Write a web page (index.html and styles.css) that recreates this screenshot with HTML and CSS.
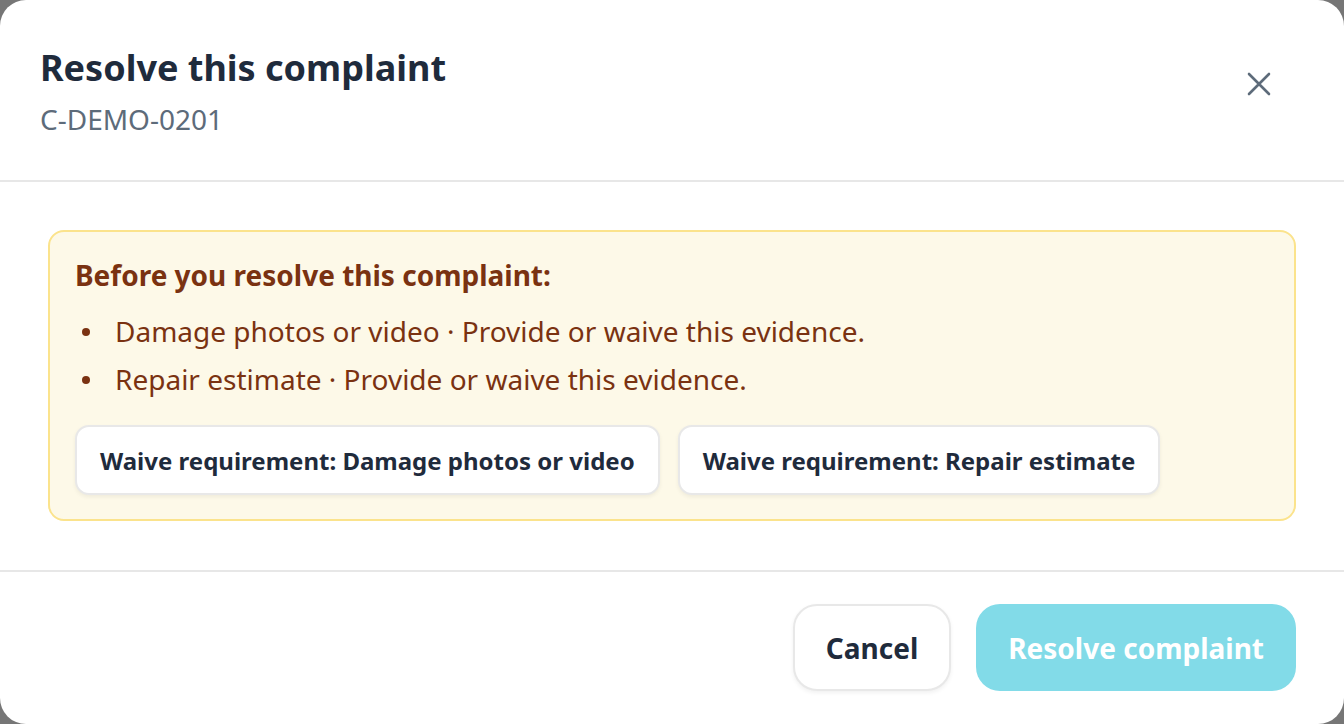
FILE: index.html
```html
<!DOCTYPE html>
<html lang="en">
<head>
<meta charset="utf-8">
<title>Resolve this complaint</title>
<link rel="stylesheet" href="styles.css">
</head>
<body>
<div class="modal" role="dialog" aria-labelledby="modal-title">
  <header class="modal-header">
    <div class="heading">
      <h1 id="modal-title" class="title">Resolve this complaint</h1>
      <p class="subtitle">C-DEMO-0201</p>
    </div>
    <button class="close" aria-label="Close">
      <svg width="24" height="24" viewBox="0 0 24 24" fill="none" stroke="currentColor" stroke-width="2.6" stroke-linecap="round"><path d="M2 2L22 22M22 2L2 22"/></svg>
    </button>
  </header>
  <section class="modal-body">
    <div class="notice">
      <h2 class="notice-title">Before you resolve this complaint:</h2>
      <ul class="notice-list">
        <li>Damage photos or video · Provide or waive this evidence.</li>
        <li>Repair estimate · Provide or waive this evidence.</li>
      </ul>
      <div class="waive-row">
        <button class="waive">Waive requirement: Damage photos or video</button>
        <button class="waive">Waive requirement: Repair estimate</button>
      </div>
    </div>
  </section>
  <footer class="modal-footer">
    <button class="btn btn-cancel">Cancel</button>
    <button class="btn btn-primary" disabled>Resolve complaint</button>
  </footer>
</div>
</body>
</html>
```
FILE: styles.css
```css
* { box-sizing: border-box; }
html, body { margin: 0; padding: 0; height: 100%; }
body {
  background: #767676;
  font-family: "Noto Sans", "Open Sans", sans-serif;
  color: #1f2b3c;
}
.modal {
  width: 1344px;
  height: 724px;
  background: #fff;
  border-radius: 26px;
  display: flex;
  flex-direction: column;
  overflow: hidden;
}
.modal-header {
  display: flex;
  justify-content: space-between;
  align-items: flex-start;
  padding: 44px 40px 0 40px;
  height: 182px;
  border-bottom: 2px solid #e7e7e7;
}
.title {
  margin: 0;
  font-size: 36px;
  font-weight: 700;
  line-height: 48px;
  color: #1f2b3c;
}
.subtitle {
  margin: 7px 0 0;
  font-size: 28px;
  line-height: 40px;
  color: #5d6b7a;
}
.close {
  border: 0;
  background: none;
  color: #5d6b7a;
  padding: 0;
  margin: 28px 33px 0 0;
  width: 24px;
  height: 24px;
  cursor: pointer;
}
.close svg { display: block; }
.modal-body {
  padding: 48px 48px 49px 48px;
  border-bottom: 2px solid #e7e7e7;
}
.notice {
  background: #fdf9e8;
  border: 2px solid #fbe38c;
  border-radius: 16px;
  padding: 23px 25px 24px 25px;
  color: #7a3211;
}
.notice-title {
  margin: 0;
  font-size: 28px;
  font-weight: 700;
  line-height: 40px;
}
.notice-list {
  list-style: none;
  margin: 12px 0 0;
  padding: 0;
  font-size: 28px;
  line-height: 48px;
}
.notice-list li {
  display: flex;
  align-items: center;
}
.notice-list li::before {
  content: "";
  flex: none;
  width: 8px;
  height: 8px;
  border-radius: 50%;
  background: currentColor;
  margin: 2px 25px 0 7px;
}
.waive-row {
  display: flex;
  gap: 18px;
  margin-top: 22px;
}
.waive {
  font-family: inherit;
  font-size: 24px;
  font-weight: 700;
  color: #1f2b3c;
  background: #fff;
  border: 2px solid #e8e8e8;
  border-radius: 14px;
  height: 70px;
  padding: 0 23px;
  box-shadow: 0 2px 4px rgba(0,0,0,0.06);
}
.modal-footer {
  flex: 1;
  display: flex;
  justify-content: flex-end;
  align-items: flex-start;
  gap: 25px;
  padding: 32px 48px 0 0;
}
.btn {
  font-family: inherit;
  font-size: 28px;
  font-weight: 700;
  height: 87px;
  border-radius: 24px;
  padding: 0 31px;
}
.btn-cancel {
  background: #fff;
  color: #1f2b3c;
  border: 2px solid #e8e8e8;
  box-shadow: 0 2px 4px rgba(0,0,0,0.06);
}
.btn-primary {
  background: #82dbe8;
  color: #fff;
  border: 0;
  padding: 0 32px;
}
```
